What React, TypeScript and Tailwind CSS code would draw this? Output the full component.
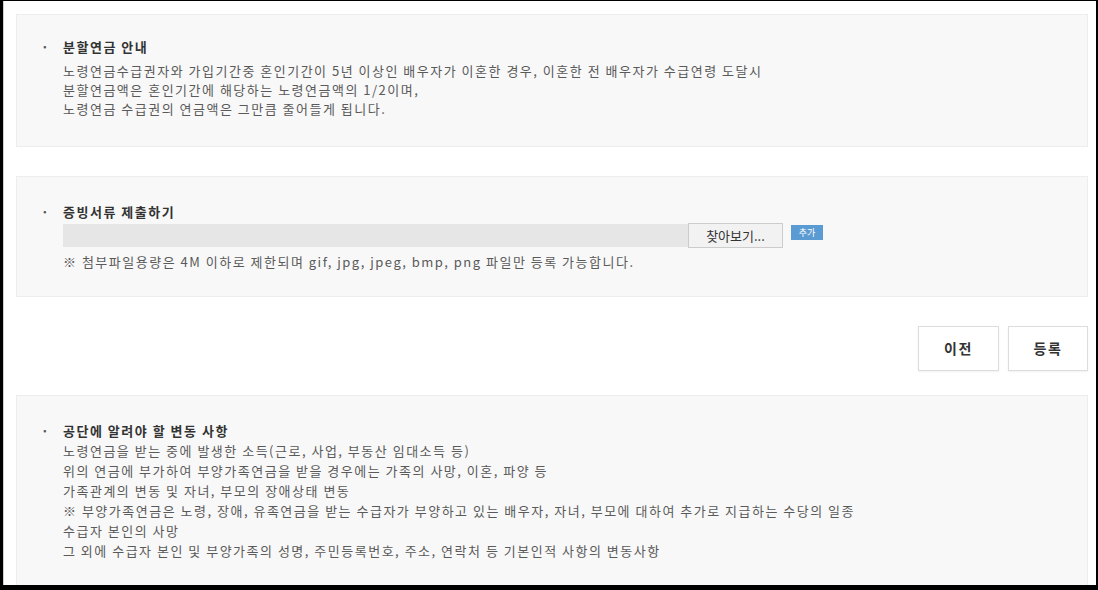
const infoLines = [
  "노령연금수급권자와 가입기간중 혼인기간이 5년 이상인 배우자가 이혼한 경우, 이혼한 전 배우자가 수급연령 도달시",
  "분할연금액은 혼인기간에 해당하는 노령연금액의 1/2이며,",
  "노령연금 수급권의 연금액은 그만큼 줄어들게 됩니다.",
];

const changeLines = [
  "노령연금을 받는 중에 발생한 소득(근로, 사업, 부동산 임대소득 등)",
  "위의 연금에 부가하여 부양가족연금을 받을 경우에는 가족의 사망, 이혼, 파양 등",
  "가족관계의 변동 및 자녀, 부모의 장애상태 변동",
  "※ 부양가족연금은 노령, 장애, 유족연금을 받는 수급자가 부양하고 있는 배우자, 자녀, 부모에 대하여 추가로 지급하는 수당의 일종",
  "수급자 본인의 사망",
  "그 외에 수급자 본인 및 부양가족의 성명, 주민등록번호, 주소, 연락처 등 기본인적 사항의 변동사항",
];

function Panel({
  title,
  className,
  titleClass,
  children,
}: {
  title: string;
  className: string;
  titleClass?: string;
  children: React.ReactNode;
}) {
  return (
    <div className={`bg-[#f8f8f8] border border-[#ededed] pl-[24px] pr-6 ${className}`}>
      <div className="flex">
        <span className="w-[22px] text-[#555] font-bold leading-[20px]">·</span>
        <div className="flex-1">
          <h3 className={`font-bold text-[#333] leading-[20px] ${titleClass ?? ""}`}>{title}</h3>
          {children}
        </div>
      </div>
    </div>
  );
}

export default function App() {
  return (
    <div className="w-[1098px] h-[590px] bg-black pl-[2px] pr-[2px] pt-[1px] pb-[5px] overflow-hidden">
      <div className="h-full ml-[1px] bg-white border-l border-[#cfcfcf] pl-[12px] pr-[8px] pt-[13px] overflow-hidden font-['Noto_Sans_CJK_KR',sans-serif] text-[13px] tracking-[1.5px] text-[#5a5a5a]">
        <Panel title="분할연금 안내" className="pt-[22px] pb-[28px]" titleClass="mb-[4px]">
          {infoLines.map((line) => (
            <p key={line} className="leading-[19px]">{line}</p>
          ))}
        </Panel>

        <div className="mt-[29px]">
          <Panel title="증빙서류 제출하기" className="pt-[25px] pb-[24px]">
            <div className="flex items-start mt-[2px]">
              <div className="w-[625px] h-[23px] bg-[#e6e6e6]" />
              <button className="w-[95px] h-[25px] -mt-[1px] border border-[#cccccc] bg-[#f2f2f2] text-[#333] text-[13px] tracking-normal">
                찾아보기...
              </button>
              <span className="ml-[8px] mt-[1px] w-[32px] h-[15px] bg-[#5b9bd3] text-white text-[9px] tracking-normal leading-[15px] text-center">
                추가
              </span>
            </div>
            <p className="leading-[20px] mt-[4px]">
              ※ 첨부파일용량은 4M 이하로 제한되며 gif, jpg, jpeg, bmp, png 파일만 등록 가능합니다.
            </p>
          </Panel>
        </div>

        <div className="flex justify-end gap-[9px] mt-[29px] mb-[24px]">
          <button className="w-[81px] h-[45px] bg-white border border-[#dddddd] shadow-[0_1px_2px_rgba(0,0,0,0.06)] text-[14px] font-bold text-[#333]">
            이전
          </button>
          <button className="w-[80px] h-[45px] bg-white border border-[#dddddd] shadow-[0_1px_2px_rgba(0,0,0,0.06)] text-[14px] font-bold text-[#333]">
            등록
          </button>
        </div>

        <Panel title="공단에 알려야 할 변동 사항" className="pt-[25px] pb-[26px]">
          {changeLines.map((line) => (
            <p key={line} className="leading-[20px]">{line}</p>
          ))}
        </Panel>
      </div>
    </div>
  );
}
